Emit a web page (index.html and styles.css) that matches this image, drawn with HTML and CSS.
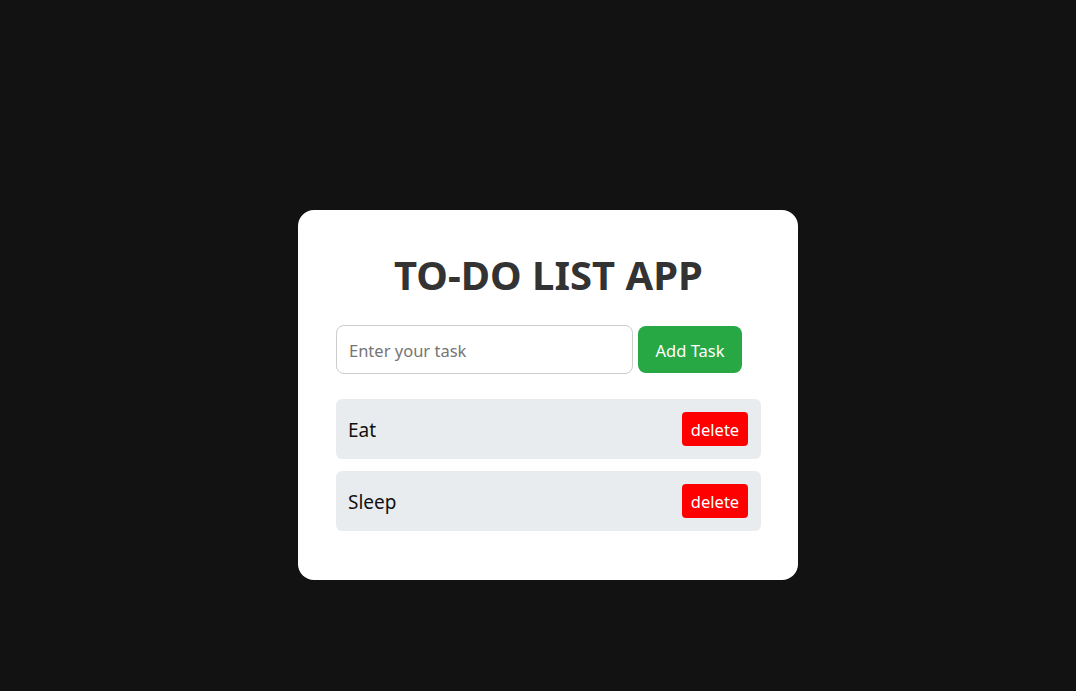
FILE: index.html
```html
<!DOCTYPE html>
<html lang="en">
<head>
<meta charset="utf-8">
<title>To-Do List App</title>
<link rel="stylesheet" href="styles.css">
</head>
<body>
<main class="page">
  <section class="card">
    <h1 class="title">TO-DO LIST APP</h1>
    <div class="add-row">
      <input class="task-input" type="text" placeholder="Enter your task">
      <button class="add-btn">Add Task</button>
    </div>
    <ul class="task-list">
      <li class="task"><span class="task-text">Eat</span><button class="del-btn">delete</button></li>
      <li class="task"><span class="task-text">Sleep</span><button class="del-btn">delete</button></li>
    </ul>
  </section>
</main>
</body>
</html>
```
FILE: styles.css
```css
* { box-sizing: border-box; }
html, body { margin: 0; height: 100%; }
body {
  background: #121212;
  font-family: "Noto Sans", "Open Sans", sans-serif;
  overflow: hidden;
}
.page {
  padding: 210px 0 0 298px;
}
.card {
  width: 500px;
  background: #fff;
  border-radius: 16px;
  padding: 41px 37px 49px 38px;
}
.title {
  margin: 0;
  font-size: 40px;
  line-height: 48px;
  font-weight: 700;
  color: #333;
  text-align: center;
}
.add-row {
  display: flex;
  align-items: center;
  gap: 5px;
  margin-top: 26px;
}
.task-input {
  width: 297px;
  height: 49px;
  border: 1px solid #ccc;
  border-radius: 8px;
  padding: 2px 12px 0;
  font-family: inherit;
  font-size: 16.5px;
  color: #333;
  outline: none;
}
.task-input::placeholder { color: #757575; }
.add-btn {
  width: 104px;
  height: 47px;
  border: none;
  border-radius: 8px;
  background: #28a745;
  color: #fff;
  font-family: inherit;
  font-size: 16.5px;
  padding: 2px 0 0;
}
.task-list {
  list-style: none;
  margin: 25px 0 0;
  padding: 0;
  display: flex;
  flex-direction: column;
  gap: 12px;
}
.task {
  height: 60px;
  background: #e9ecef;
  border-radius: 6px;
  display: flex;
  align-items: center;
  justify-content: space-between;
  padding: 0 13px 0 12px;
}
.task-text {
  font-size: 19px;
  color: #111;
  padding-top: 2px;
}
.del-btn {
  width: 66px;
  height: 34px;
  border: none;
  border-radius: 4px;
  background: #ff0000;
  color: #fff;
  font-family: inherit;
  font-size: 16.5px;
  padding: 0;
}
```
